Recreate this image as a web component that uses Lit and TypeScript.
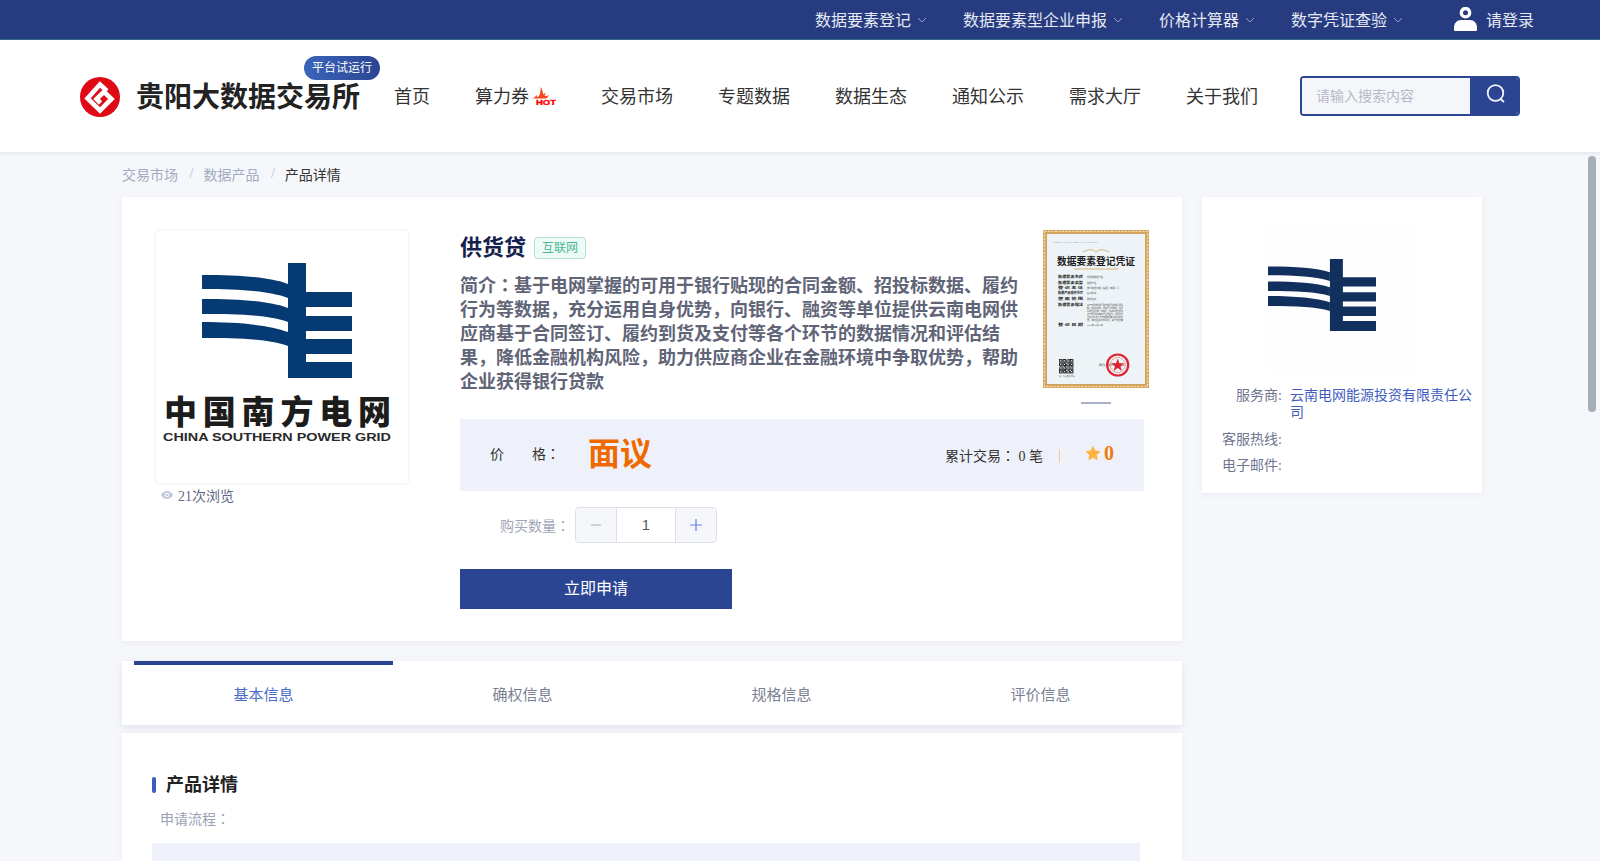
import { LitElement, html, css, svg } from "lit";
import { customElement } from "lit/decorators.js";

const chevron = html`<svg class="chev" viewBox="0 0 10 6" width="10" height="6"><path d="M1 1l4 4 4-4" fill="none" stroke="currentColor" stroke-width="1"/></svg>`;
const colon = html`<span class="colon">：</span>`;

const gridMark = svg`
  <path d="M48 46C85 46 115 48 134 55V69C115 62 85 60 48 60Z"/>
  <path d="M48 70C85 70 115 72 134 79V93C115 86 85 85 48 85Z"/>
  <path d="M48 93C85 93 115 96 134 103V117C115 110 85 109 48 109Z"/>
  <path d="M134 34H152V63H198V78H152V87H198V102H152V110H198V125H152V133H198V149H134Z"/>
`;

function certRows() {
  const rows: [string, string, number][] = [
    ["数据要素名称", "供货贷数据产品", 47],
    ["数据要素类型", "数据产品", 52.5],
    ["登 记 主 体", "贵州数据流通（集团）有限公司", 57.5],
    ["数据产品提供方式", "接口服务", 63],
    ["使 用 范 围", "数字经济", 68.5],
    ["数据要素描述", "", 74.5],
    ["登 记 日 期", "2023年08月28日", 95],
  ];
  const desc = ["基于电网掌握的可用于银行贴现的合同金", "额、招投标数据、履约行为等数据，充分", "运用自身优势，向银行、融资等单位提供", "云南电网供应商基于合同签订、履约到货", "及支付等各个环节的数据情况和评估结", "果，降低金融机构风险，助力供应商"];
  return svg`
    ${rows.map(([k, v, y]) => svg`
      <text x="15" y="${y + 1.4}" class="ck" textLength="25" lengthAdjust="spacingAndGlyphs">${k}</text>
      ${v ? svg`<text x="44" y="${y + 1.2}" class="cv">${v}</text>` : null}`)}
    ${desc.map((d, i) => svg`<text x="44" y="${75.5 + i * 3}" class="cv" textLength="36" lengthAdjust="spacingAndGlyphs">${d}</text>`)}
  `;
}

function qr() {
  const cells = [];
  for (let r = 0; r < 12; r++) {
    for (let c = 0; c < 12; c++) {
      const corner = (r < 4 && c < 4) || (r < 4 && c > 7) || (r > 7 && c < 4);
      const on = corner ? !(r % 3 === 1 && c % 3 === 1) || false : (r * 7 + c * 13 + r * c) % 3 !== 0;
      if (on) cells.push(svg`<rect x="${16 + c * 1.2}" y="${129 + r * 1.2}" width="1.2" height="1.2"/>`);
    }
  }
  return cells;
}

@customElement("app-root")
export class AppRoot extends LitElement {
  static styles = css`
    :host {
      display: flex;
      flex-direction: column;
      position: relative;
      height: 100vh;
      overflow: hidden;
      font-family: "Liberation Serif", "Noto Sans CJK SC", serif;
      font-size: 14px;
      color: #333;
      background: #f5f7fb;
    }
    .colon { font-family: "Noto Sans CJK TC", sans-serif; line-height: 0; }
    .topbar {
      flex: none;
      box-sizing: border-box;
      height: 40px;
      background: #273c80;
      border-bottom: 1px solid #2c6a85;
      display: flex;
      align-items: center;
      padding: 0 0 2px 815px;
      color: #e6e9f4;
      font-size: 16px;
    }
    .tb-item { display: flex; align-items: center; gap: 6px; margin-right: 36px; }
    .chev { color: rgba(255, 255, 255, 0.5); margin-top: 2px; }
    .login { display: flex; align-items: center; gap: 9px; margin-left: 15px; }
    .header {
      flex: none;
      position: relative;
      z-index: 2;
      height: 112px;
      background: #fff;
      box-shadow: 0 1px 4px rgba(60, 70, 120, 0.12);
      display: flex;
      align-items: center;
      padding: 0 0 0 80px;
      box-sizing: border-box;
    }
    .brand { display: flex; align-items: center; gap: 16px; position: relative; margin-right: 34px; margin-top: 1px; }
    .brand-name { font-size: 28px; font-weight: 700; color: #222; width: 224px; white-space: nowrap; line-height: 40px; margin-top: 3px; }
    .badge {
      position: absolute;
      left: 224px;
      top: -19px;
      width: 76px;
      height: 24px;
      border-radius: 12px;
      background: linear-gradient(90deg, #3a65bb, #2b4592);
      color: #fff;
      font-size: 12px;
      line-height: 24px;
      text-align: center;
    }
    .nav { display: flex; align-items: center; gap: 45px; font-size: 18px; color: #333; margin-top: -2px; }
    .nav-item { display: flex; align-items: center; gap: 3px; white-space: nowrap; }
    .hot { width: 24px; flex: none; }
    .search {
      margin-left: 42px;
      width: 220px;
      height: 40px;
      box-sizing: border-box;
      border: 2px solid #2b4592;
      border-radius: 4px;
      display: flex;
      overflow: hidden;
    }
    .search-input {
      flex: 1;
      background: #f5f6fa;
      color: #b5b9c8;
      font-size: 14px;
      line-height: 38px;
      padding-left: 14px;
    }
    .search-btn { width: 48px; background: #2b4592; display: flex; align-items: center; justify-content: center; }
    .search-btn svg { margin: -4px 0 0 3px; }
    .scroll { flex: 1; overflow: hidden; padding-left: 122px; }
    .thumb {
      position: absolute;
      z-index: 3;
      top: 156px;
      right: 4px;
      width: 8px;
      height: 256px;
      border-radius: 4px;
      background: #a6aeb8;
    }
    .page { width: 1360px; height: 1904px; }
    .crumbs { height: 45px; display: flex; align-items: center; color: #a3abc0; padding-bottom: 1px; box-sizing: border-box; }
    .crumbs .sep { margin: 0 10px 0 11.5px; color: #b5bccc; }
    .crumbs .cur { color: #333; }
    .cols { display: flex; gap: 20px; align-items: flex-start; }
    .main { width: 1060px; }
    .card { background: #fff; box-shadow: 0 2px 6px rgba(60, 70, 120, 0.06); }
    .product { padding: 32px; display: flex; gap: 50px; height: 444px; box-sizing: border-box; }
    .left { width: 256px; flex: none; }
    .logo-box {
      width: 256px;
      height: 256px;
      box-sizing: border-box;
      border: 2px solid #f6f7fc;
      border-radius: 6px;
      display: block;
    }
    .views { display: flex; align-items: center; gap: 5px; padding-left: 7px; color: #5f6785; height: 20px; }
    .info { width: 684px; flex: none; }
    .top-row { display: flex; gap: 23px; margin-right: -5px; margin-bottom: 15px; }
    .text { width: 560px; flex: none; }
    .title-row { display: flex; align-items: center; height: 36px; gap: 8px; margin-bottom: 9px; }
    .title { font-size: 22px; font-weight: 700; color: #14204d; margin-top: -4px; }
    .tag {
      height: 22px;
      box-sizing: border-box;
      width: 52px;
      margin-top: 2px;
      border: 1px solid #b4e3d3;
      background: #eefaf6;
      border-radius: 3px;
      color: #4cb795;
      font-size: 12px;
      line-height: 20px;
      text-align: center;
    }
    .desc { font-size: 18px; line-height: 24px; font-weight: 700; color: #5f6477; margin-bottom: -1px; }
    .cert-col { width: 106px; padding-top: 1px; display: flex; flex-direction: column; align-items: center; gap: 14px; }
    .cert { display: block; }
    .cert .ck { font-size: 3.4px; font-weight: 700; fill: #1c1c1c; }
    .cert .cv { font-size: 2.3px; fill: #555; }
    .thumb-line { width: 30px; height: 2px; background: #a9b1c9; }
    .price {
      height: 72px;
      background: #eef1fa;
      display: flex;
      align-items: center;
      padding: 0 30px;
      color: #333;
    }
    .p-label { width: 70px; display: flex; justify-content: space-between; margin-top: -4px; }
    .p-val { margin-left: 28px; font-size: 32px; font-weight: 700; color: #ee6a00; line-height: 40px; margin-top: -2px; }
    .p-stats { margin-left: auto; display: flex; align-items: center; }
    .p-sep { width: 1px; height: 14px; background: #f5c98a; margin: 2px 25px 0 16px; }
    .p-score { display: flex; align-items: center; gap: 3px; color: #ee7a10; font-size: 20px; font-weight: 700; margin-top: -4px; }
    .qty { display: flex; align-items: center; margin-top: 16px; padding-left: 40px; gap: 5px; color: #a0a5b8; }
    .stepper {
      width: 142px;
      height: 36px;
      box-sizing: border-box;
      border: 1px solid #dcdfe8;
      border-radius: 4px;
      display: flex;
      overflow: hidden;
    }
    .step { width: 40px; background: #f5f6fa; display: flex; align-items: center; justify-content: center; }
    .num {
      flex: 1;
      border-left: 1px solid #dcdfe8;
      border-right: 1px solid #dcdfe8;
      background: #fff;
      text-align: center;
      line-height: 34px;
      font-family: "Liberation Sans", sans-serif;
      color: #555;
    }
    .apply {
      margin-top: 26px;
      width: 272px;
      height: 40px;
      background: #2b4592;
      color: #fff;
      font-size: 16px;
      line-height: 40px;
      text-align: center;
    }
    .tabs {
      margin-top: 20px;
      height: 64px;
      padding: 0 12px;
      display: flex;
      background: #fff;
      box-shadow: 0 3px 8px rgba(60, 70, 120, 0.1);
      position: relative;
    }
    .tab {
      flex: 1;
      box-sizing: border-box;
      border-top: 4px solid transparent;
      text-align: center;
      line-height: 60px;
      font-size: 15px;
      color: #7a7f92;
    }
    .tab.on { border-top-color: #2b4592; color: #4a6bc5; }
    .detail { margin-top: 8px; padding: 40px 30px 0; height: 1000px; box-sizing: border-box; }
    .h { display: flex; align-items: center; gap: 10px; font-size: 18px; font-weight: 700; color: #222; line-height: 24px; }
    .h::before { content: ""; width: 4px; height: 16px; border-radius: 2px; background: #3c5ac0; }
    .flow-label { margin: 13px 0 13px 8px; line-height: 20px; color: #9aa1b5; }
    .flow { width: 988px; height: 600px; background: #eef1fa; }
    .side { width: 280px; height: 296px; box-sizing: border-box; padding-top: 25px; }
    .side-logo {
      width: 150px;
      height: 150px;
      margin-left: 66px;
      background: #fefefe;
    }
    .side-logo svg { display: block; padding-top: 37px; fill: #12305e; }
    .rows { margin-top: 15px; display: grid; grid-template-columns: 80px 186px; column-gap: 8px; row-gap: 9.5px; line-height: 17px; }
    .rows .k { text-align: right; color: #6f7590; }
    .rows .v { color: #3f5cc0; }
  `;

  render() {
    const top = ["数据要素登记", "数据要素型企业申报", "价格计算器", "数字凭证查验"];
    const nav = ["交易市场", "专题数据", "数据生态", "通知公示", "需求大厅", "关于我们"];
    const tabs = ["基本信息", "确权信息", "规格信息", "评价信息"];
    return html`
      <div class="topbar">
        ${top.map((t) => html`<div class="tb-item">${t}${chevron}</div>`)}
        <div class="login">
          <svg width="23" height="24" viewBox="0 0 23 24">
            <path d="M0 21c0-5 3-8 7-8h9c4 0 7 3 7 8v2a1 1 0 0 1-1 1H1a1 1 0 0 1-1-1z" fill="#fff"/>
            <circle cx="11.5" cy="5.7" r="4.200" fill="none" stroke="#fff" stroke-width="3.400"/>
          </svg>
          请登录
        </div>
      </div>

      <div class="header">
        <div class="brand">
          <svg width="40" height="40" viewBox="0 0 40 40">
            <circle cx="20" cy="20" r="20" fill="#e00a16"/>
            <path d="M27 14L20 7.500 7.500 21.500 20 33.500 31.500 22 24 14.800 16.500 22 20.500 26" fill="none" stroke="#fff" stroke-width="4.600"/>
          </svg>
          <div class="brand-name">贵阳大数据交易所</div>
          <div class="badge">平台试运行</div>
        </div>
        <div class="nav">
          <div class="nav-item">首页</div>
          <div class="nav-item">
            算力券
            <svg class="hot" width="24" height="20" viewBox="0 0 24 20">
              <path d="M0 14c3-1 4-4 5-4-.5 1 0 2 1 2 1.500-1 3-5 2.500-10 2 2 2.500 6 2.500 7.500 1-.5 2-1.500 2.500-2 0 1.500-.5 2.500-1 3.500 1.500 0 3-.5 4.500-.5-1 1-2 2.500-3 3H4c-1 0-2-.5-4 .5z" fill="#f6481a"/>
              <text x="4" y="19.800" font-family="Liberation Sans, sans-serif" font-size="8" font-weight="900" fill="#f00" textLength="20" lengthAdjust="spacingAndGlyphs" stroke="#f00" stroke-width=".4">HOT</text>
            </svg>
          </div>
          ${nav.map((n) => html`<div class="nav-item">${n}</div>`)}
        </div>
        <div class="search">
          <div class="search-input">请输入搜索内容</div>
          <div class="search-btn">
            <svg width="22" height="22" viewBox="0 0 22 22" fill="none" stroke="#f2f4fb" stroke-width="1.800">
              <circle cx="10.500" cy="10" r="7.800"/>
              <path d="M15.500 16l3.500 3"/>
            </svg>
          </div>
        </div>
      </div>

      <div class="scroll">
        <div class="page">
          <div class="crumbs">
            <span>交易市场</span><span class="sep">/</span><span>数据产品</span><span class="sep">/</span><span class="cur">产品详情</span>
          </div>
          <div class="cols">
            <div class="main">
              <div class="card product">
                <div class="left">
                  <svg class="logo-box" viewBox="2 2 252 252" width="256" height="256">
                    <g fill="#063a72">${gridMark}</g>
                    <text x="10" y="195" textLength="227" lengthAdjust="spacing" font-family="Noto Sans CJK SC, sans-serif" font-weight="900" font-size="33" fill="#1c1c1c">中国南方电网</text>
                    <text x="9" y="212" textLength="228" lengthAdjust="spacingAndGlyphs" font-family="Liberation Sans, sans-serif" font-weight="700" font-size="11" fill="#2a2a2a">CHINA SOUTHERN POWER GRID</text>
                  </svg>
                  <div class="views">
                    <svg width="12" height="8" viewBox="0 0 12 8"><path d="M0 4c1.500-2.500 3.500-4 6-4s4.500 1.500 6 4c-1.500 2.500-3.500 4-6 4S1.500 6.500 0 4z" fill="#c3c9da"/><circle cx="6" cy="4" r="2.200" fill="#fff"/><circle cx="6" cy="4" r="1.200" fill="#c3c9da"/></svg>
                    <span>21次浏览</span>
                  </div>
                </div>
                <div class="info">
                  <div class="top-row">
                    <div class="text">
                      <div class="title-row">
                        <span class="title">供货贷</span>
                        <span class="tag">互联网</span>
                      </div>
                      <div class="desc">简介${colon}基于电网掌握的可用于银行贴现的合同金额、招投标数据、履约行为等数据，充分运用自身优势，向银行、融资等单位提供云南电网供应商基于合同签订、履约到货及支付等各个环节的数据情况和评估结果，降低金融机构风险，助力供应商企业在金融环境中争取优势，帮助企业获得银行贷款</div>
                    </div>
                    <div class="cert-col">
                      <svg class="cert" width="106" height="158" viewBox="0 0 106 158">
                        <rect width="106" height="158" fill="#d8a75e"/>
                        <rect x="1.500" y="1.500" width="103" height="155" fill="none" stroke="#f3dfb8" stroke-width="1.200" stroke-dasharray="2 1.500"/>
                        <rect x="3.500" y="3.500" width="99" height="151" fill="#edf3f6" stroke="#c99a50" stroke-width=".8"/>
                        <text x="10" y="12.500" font-size="2.600" fill="#777" textLength="44">NDRE-T-Q-TW-JR00-KY-JX-9D-9D</text>
                        <path d="M40 22c5-3 10-3 13 0 3-3 8-3 13 0" fill="none" stroke="#c9a45c" stroke-width=".8"/>
                        <text x="14" y="34.500" font-size="9.700" font-weight="700" fill="#1c1c1c" textLength="78" lengthAdjust="spacingAndGlyphs">数据要素登记凭证</text>
                        <path d="M31 39h44" stroke="#c9a45c" stroke-width=".8"/>
                        ${certRows()}
                        <g fill="#222">${qr()}</g>
                        <text x="16" y="147" font-size="2.200" fill="#666">扫一扫 查看详情</text>
                        <text x="56" y="136" font-size="2.300" fill="#555">贵阳大数据交易所（盖章）</text>
                        <circle cx="74.700" cy="135" r="10.500" fill="none" stroke="#e0202a" stroke-width="2.200"/>
                        <circle cx="74.700" cy="135" r="7.500" fill="none" stroke="#e0202a" stroke-width=".6" stroke-dasharray="1 .6"/>
                        <path d="M74.700 128.500l1.700 4.700h5l-4 3 1.500 4.800-4.200-2.900-4.200 2.900 1.500-4.800-4-3h5z" fill="#e0202a"/>
                      </svg>
                      <div class="thumb-line"></div>
                    </div>
                  </div>
                  <div class="price">
                    <div class="p-label"><span>价</span><span>格${colon}</span></div>
                    <div class="p-val">面议</div>
                    <div class="p-stats">
                      <span>累计交易${colon} 0 笔</span>
                      <span class="p-sep"></span>
                      <span class="p-score">
                        <svg width="16" height="16" viewBox="0 0 24 24"><path d="M12 1l3.500 7.200 7.900 1.100-5.700 5.600 1.300 7.900L12 19.100l-7 3.700 1.300-7.900L.6 9.300l7.900-1.100z" fill="#ffb240"/></svg>
                        0
                      </span>
                    </div>
                  </div>
                  <div class="qty">
                    <span>购买数量${colon}</span>
                    <div class="stepper">
                      <div class="step"><svg width="12" height="12" viewBox="0 0 12 12"><path d="M1 6h10" stroke="#a3a9bb" stroke-width="1.200"/></svg></div>
                      <div class="num">1</div>
                      <div class="step"><svg width="12" height="12" viewBox="0 0 12 12"><path d="M0 6h12M6 0v12" stroke="#6a80e8" stroke-width="1.200"/></svg></div>
                    </div>
                  </div>
                  <div class="apply">立即申请</div>
                </div>
              </div>

              <div class="tabs">
                ${tabs.map((t, i) => html`<div class="tab ${i === 0 ? "on" : ""}">${t}</div>`)}
              </div>

              <div class="card detail">
                <div class="h">产品详情</div>
                <div class="flow-label">申请流程${colon}</div>
                <div class="flow"></div>
              </div>
            </div>

            <div class="card side">
              <div class="side-logo">
                <svg width="108" height="72" viewBox="48 34 150 115" preserveAspectRatio="none">${gridMark}</svg>
              </div>
              <div class="rows">
                <div class="k">服务商:</div><div class="v">云南电网能源投资有限责任公司</div>
                <div class="k">客服热线:</div><div class="v"></div>
                <div class="k">电子邮件:</div><div class="v"></div>
              </div>
            </div>
          </div>
        </div>
      </div>
      <div class="thumb"></div>
    `;
  }
}
